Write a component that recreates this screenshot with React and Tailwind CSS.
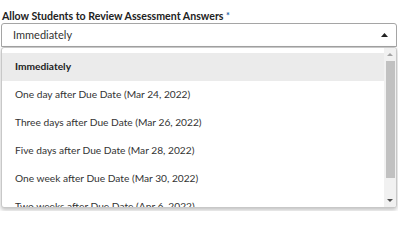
import React from "react";

const options = [
  "Immediately",
  "One day after Due Date (Mar 24, 2022)",
  "Three days after Due Date (Mar 26, 2022)",
  "Five days after Due Date (Mar 28, 2022)",
  "One week after Due Date (Mar 30, 2022)",
  "Two weeks after Due Date (Apr 6, 2022)",
];

const App = () => {
  const selected = "Immediately";

  return (
    <div className="relative w-[398px] h-[211px] overflow-hidden bg-white font-['Lato',sans-serif]">
      <div className="pt-[9px] pl-[2px] text-[10.6px] font-bold leading-[14px] text-[#222]">
        Allow Students to Review Assessment Answers{" "}
        <span className="text-[#1f5fa8] text-[9px] align-top">*</span>
      </div>

      {/* select box */}
      <div className="ml-[1px] mr-[1px] h-[24px] flex items-center justify-between border border-[#a5a5a5] rounded-t-[3px] pl-[11px] pr-[8px] text-[11px] text-[#333]">
        <span>{selected}</span>
        <svg width="7" height="4" viewBox="0 0 7 4">
          <path d="M0 4 L3.5 0 L7 4 Z" fill="#222" />
        </svg>
      </div>

      {/* open dropdown */}
      <div className="absolute left-[1px] right-[1px] top-[47px] h-[161px] flex border border-[#c8c8c8] rounded-[3px] bg-white shadow-[0_2px_4px_rgba(0,0,0,0.25)] overflow-hidden">
        <ul className="flex-1 pt-[5px]">
          {options.map((opt) => (
            <li
              key={opt}
              className={
                opt === selected
                  ? "h-[28px] flex items-center pl-[13px] text-[10.2px] font-bold text-[#222] bg-[#ebebeb]"
                  : "h-[28px] flex items-center pl-[13px] text-[10.2px] text-[#333]"
              }
            >
              {opt}
            </li>
          ))}
        </ul>
        <div className="w-[12px] bg-[#f1f1f1] flex flex-col items-center">
          <div className="h-[13px] flex items-center justify-center">
            <svg width="6" height="3" viewBox="0 0 6 3">
              <path d="M0 3 L3 0 L6 3 Z" fill="#a3a3a3" />
            </svg>
          </div>
          <div className="w-[9px] h-[117px] bg-[#c1c1c1]" />
          <div className="flex-1" />
          <div className="h-[14px] flex items-center justify-center">
            <svg width="6" height="3" viewBox="0 0 6 3">
              <path d="M0 0 L3 3 L6 0 Z" fill="#505050" />
            </svg>
          </div>
        </div>
      </div>
    </div>
  );
};

export default App;
